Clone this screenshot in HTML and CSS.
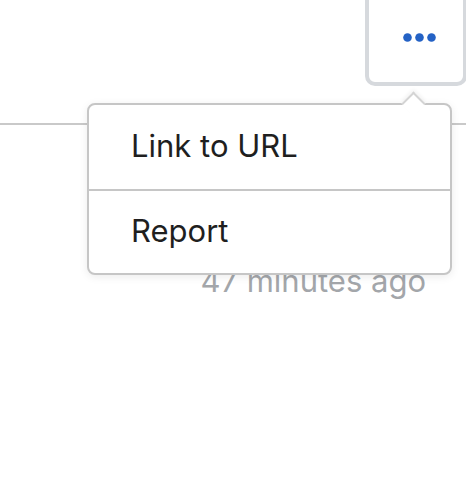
FILE: index.html
```html
<!DOCTYPE html>
<html lang="en">
<head>
    <meta charset="UTF-8">
    <meta name="viewport" content="width=device-width, initial-scale=1.0">
    <title>Post actions</title>
    <link rel="stylesheet" href="styles.css">
</head>
<body>
    <div class="post">
        <div class="toolbar">
            <button class="moreBtn" type="button" aria-label="More actions">
                <svg width="33" height="9" viewBox="0 0 33 9">
                    <circle cx="4.5" cy="4.5" r="4.3" fill="#2462c5"/>
                    <circle cx="16.5" cy="4.5" r="4.3" fill="#2462c5"/>
                    <circle cx="28.5" cy="4.5" r="4.3" fill="#2462c5"/>
                </svg>
            </button>
        </div>
        <hr class="rule">
        <p class="time">47 minutes ago</p>

        <!-- popover menu -->
        <ul class="menu">
            <li>Link to URL</li>
            <li>Report</li>
        </ul>
    </div>
</body>
</html>
```

FILE: styles.css
```css
body {
    margin: 0;
    background: #fff;
    font-family: Inter, "Noto Sans", sans-serif;
}

.post {
    position: relative;
    height: 481px;
    overflow: hidden;
}

.toolbar {
    display: flex;
    justify-content: flex-end;
    height: 85px;
}

.moreBtn {
    box-sizing: border-box;
    width: 102px;
    height: 98px;
    margin-top: -12px;
    margin-right: -1px;
    padding: 41px 0 0 6px;
    background: #fff;
    border: 4px solid #d6d9dd;
    border-radius: 10px;
    display: flex;
    align-items: flex-start;
    justify-content: center;
}

.rule {
    margin: 38px 0 0 0;
    border: none;
    border-top: 2px solid #c9c9c9;
}

.time {
    margin: 137px 40px 0 0;
    text-align: right;
    font-size: 31px;
    color: #a3a6aa;
}

.menu {
    position: absolute;
    left: 87px;
    top: 103px;
    width: 365px;
    margin: 0;
    padding: 0;
    list-style: none;
    background: #fff;
    border: 2px solid #c6c6c6;
    border-radius: 8px;
    box-shadow: 0 2px 8px rgba(0, 0, 0, 0.08);
    box-sizing: border-box;
}

.menu::before {
    content: "";
    position: absolute;
    top: -10px;
    left: 316px;
    width: 17px;
    height: 17px;
    background: #fff;
    border-top: 2px solid #d4d4d4;
    border-left: 2px solid #d4d4d4;
    box-sizing: border-box;
    transform: rotate(45deg);
    box-shadow: -2px -2px 4px rgba(0, 0, 0, 0.05);
}

.menu li {
    box-sizing: border-box;
    height: 84px;
    padding: 0 0 4px 42px;
    display: flex;
    align-items: center;
    font-size: 31px;
    color: #1f1f1f;
}

.menu li + li {
    border-top: 2px solid #c6c6c6;
}
```
